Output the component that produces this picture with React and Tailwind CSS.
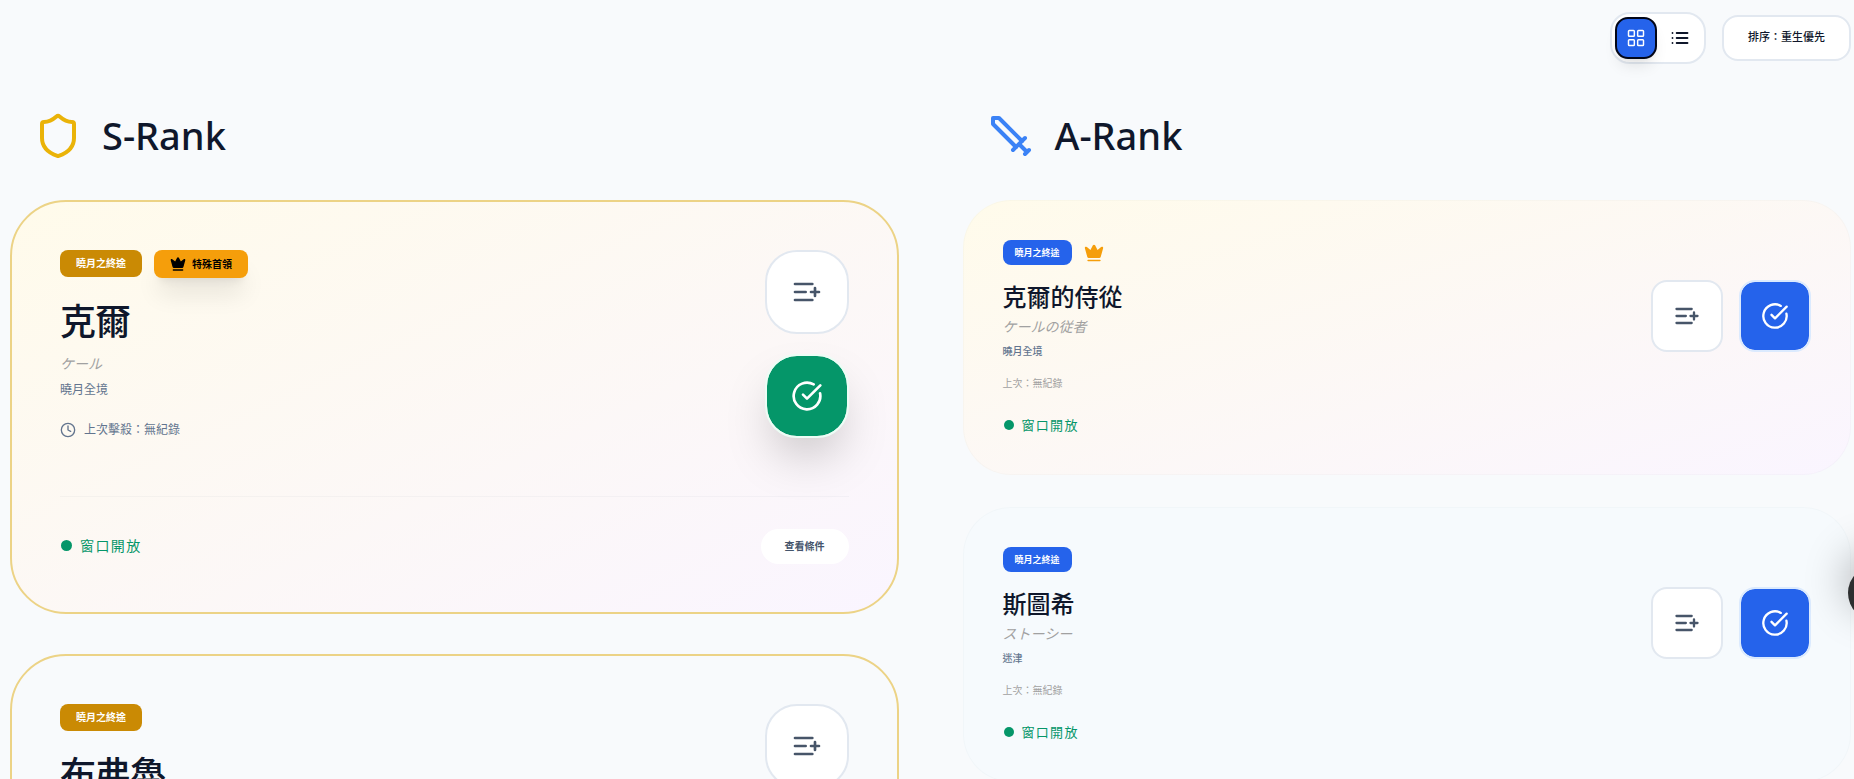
import { CircleCheckBig, Clock, Crown, LayoutGrid } from "lucide-react";

const sRankMobs = [
  { name: "克爾", jp: "ケール", area: "曉月全境", special: true },
  { name: "布弗魯", jp: "ブルブルドゥーム", area: "薩維奈島", special: false },
];

const aRankMobs = [
  { name: "克爾的侍從", jp: "ケールの従者", area: "曉月全境", special: true },
  { name: "斯圖希", jp: "ストーシー", area: "迷津", special: false },
];

const ListPlusIcon = ({ size }) => (
  <svg width={size} height={size} viewBox="0 0 24 24" fill="none" stroke="currentColor" strokeWidth="2" strokeLinecap="round" strokeLinejoin="round" aria-hidden="true">
    <path d="M11 12H3M16 6H3M16 18H3M18 9v6M21 12h-6" />
  </svg>
);

const ListIcon = () => (
  <svg className="size-5" viewBox="0 0 24 24" fill="none" stroke="currentColor" strokeWidth="2.2" strokeLinecap="round" strokeLinejoin="round" aria-hidden="true">
    <path d="M8 6h13M8 12h13M8 18h13M3 6h.01M3 12h.01M3 18h.01" />
  </svg>
);

const ShieldIcon = () => (
  <svg className="size-12 text-[#eab308]" viewBox="0 0 24 24" fill="none" stroke="currentColor" strokeWidth="2" strokeLinecap="round" strokeLinejoin="round" aria-hidden="true">
    <path d="M20 13c0 5-3.5 7.5-7.66 8.95a1 1 0 0 1-.67-.01C7.5 20.5 4 18 4 13V6a1 1 0 0 1 1-1c2 0 4.5-1.2 6.24-2.72a1.17 1.17 0 0 1 1.52 0C14.51 3.81 17 5 19 5a1 1 0 0 1 1 1z" />
  </svg>
);

const SwordIcon = () => (
  <svg className="size-12 text-[#3b82f6]" viewBox="0 0 24 24" fill="none" stroke="currentColor" strokeWidth="2" strokeLinecap="round" strokeLinejoin="round" aria-hidden="true">
    <polyline points="14.5 17.5 3 6 3 3 6 3 17.5 14.5" />
    <path d="M13 19l6-6M16 16l4 4M19 21l2-2" />
  </svg>
);

const Toolbar = () => (
  <div className="flex items-center justify-end gap-4">
    <div className="flex gap-1 rounded-[20px] border-2 border-slate-200 bg-white p-1">
      <button
        type="button"
        aria-label="卡片檢視"
        className="flex size-10 items-center justify-center rounded-xl bg-[#2563eb] text-white shadow-lg outline-2 -outline-offset-1 outline-slate-950"
      >
        <LayoutGrid size={20} strokeWidth={1.75} />
      </button>
      <button
        type="button"
        aria-label="列表檢視"
        className="flex size-10 items-center justify-center rounded-xl text-slate-900"
      >
        <ListIcon />
      </button>
    </div>
    <button
      type="button"
      className="rounded-2xl border-2 border-slate-200 bg-white px-6 pt-3 pb-3.5 text-[11px] leading-4 font-medium text-slate-900"
    >
      排序：重生優先
    </button>
  </div>
);

const RankHeader = ({ icon, title }) => (
  <div className="mb-10 flex h-12 items-center gap-5 px-6">
    {icon}
    <h2 className="pb-0.5 text-[38px] leading-none font-medium text-slate-900">{title}</h2>
  </div>
);

const SRankCard = ({ mob }) => (
  <article
    className={`rounded-[56px] border-2 border-[#ecd386] p-12 ${
      mob.special ? "bg-linear-to-br from-amber-50 to-purple-50" : "bg-slate-50"
    }`}
  >
    <div className="flex items-start justify-between">
      <div>
        <div className="flex items-start gap-3">
          <span className="rounded-lg bg-[#ca8a04] px-4 py-1.5 text-[10px] leading-[15px] font-bold text-white">
            曉月之終途
          </span>
          {mob.special && (
            <span className="flex items-center gap-1.5 rounded-lg bg-[#f59e0b] px-4 py-1.5 text-[10px] leading-4 font-bold text-black shadow-xl">
              <Crown size={16} fill="currentColor" />
              特殊首領
            </span>
          )}
        </div>
        <h3 className="mt-6 text-4xl leading-10 font-medium tracking-tight text-slate-900">{mob.name}</h3>
        <p className="mt-3 text-sm leading-5 text-neutral-400 italic">{mob.jp}</p>
        <p className="mt-2 text-xs leading-4 text-slate-500">{mob.area}</p>
        <p className="mt-6 flex items-center gap-2 text-xs leading-4 text-slate-500">
          <Clock size={16} />
          上次擊殺：無紀錄
        </p>
      </div>
      <div className="flex flex-col gap-5">
        <button
          type="button"
          aria-label="加入清單"
          className="flex size-21 items-center justify-center rounded-[32px] border-2 border-slate-200 bg-white text-[#475569]"
        >
          <ListPlusIcon size={32} />
        </button>
        <button
          type="button"
          aria-label="回報擊殺"
          className="flex size-21 items-center justify-center rounded-[32px] border-2 border-emerald-50 bg-[#059669] bg-clip-padding text-white shadow-2xl"
        >
          <CircleCheckBig size={32} />
        </button>
      </div>
    </div>
    <div className="mt-[58px] flex items-center justify-between border-t border-slate-500/5 pt-8">
      <p className="flex items-center gap-2 pb-0.5 text-sm tracking-widest text-[#059669]">
        <span className="ml-px size-[11px] rounded-full bg-[#059669]" />
        窗口開放
      </p>
      <button
        type="button"
        className="rounded-full bg-white px-6 py-2.5 text-[10px] leading-[15px] font-bold text-slate-600"
      >
        查看條件
      </button>
    </div>
  </article>
);

const ARankCard = ({ mob }) => (
  <article
    className={`rounded-[48px] p-10 inset-ring inset-ring-slate-500/3 ${
      mob.special ? "bg-linear-to-br from-amber-50 to-purple-50" : "bg-[#f6fafd]"
    }`}
  >
    <div className="flex items-center justify-between">
      <div>
        <div className="flex h-[25px] items-center gap-3">
          <span className="rounded-lg bg-[#2563eb] px-3 py-1.5 text-[9px] leading-[13px] font-bold text-white">
            曉月之終途
          </span>
          {mob.special && <Crown size={20} fill="currentColor" className="text-[#f59e0b]" />}
        </div>
        <h3 className="mt-4 text-2xl leading-8 font-medium text-slate-900">{mob.name}</h3>
        <p className="mt-1 text-sm leading-5 text-neutral-400 italic">{mob.jp}</p>
        <p className="mt-1.5 text-[10px] leading-4 font-medium text-slate-500">{mob.area}</p>
        <p className="mt-4 text-[10px] leading-4 text-neutral-400">上次：無紀錄</p>
      </div>
      <div className="flex gap-4">
        <button
          type="button"
          aria-label="加入清單"
          className="flex size-18 items-center justify-center rounded-2xl border-2 border-slate-200 bg-white text-[#475569]"
        >
          <ListPlusIcon size={28} />
        </button>
        <button
          type="button"
          aria-label="回報擊殺"
          className="flex size-18 items-center justify-center rounded-2xl border-2 border-blue-100 bg-[#2563eb] bg-clip-padding text-white"
        >
          <CircleCheckBig size={28} />
        </button>
      </div>
    </div>
    <p className="mt-6 flex items-center gap-2 text-[13px] leading-5 tracking-widest text-[#059669]">
      <span className="ml-px size-2.5 rounded-full bg-[#059669]" />
      窗口開放
    </p>
  </article>
);

const App = () => {
  return (
    <div className="h-screen overflow-hidden bg-slate-50 pt-3 pr-[3px] pl-2.5 font-['Noto_Sans','Noto_Sans_CJK_TC',sans-serif]">
      <Toolbar />
      <main className="mt-12 grid grid-cols-2 gap-16">
        <section>
          <RankHeader icon={<ShieldIcon />} title="S-Rank" />
          <div className="flex flex-col gap-10">
            {sRankMobs.map((mob) => (
              <SRankCard key={mob.name} mob={mob} />
            ))}
          </div>
        </section>
        <section>
          <RankHeader icon={<SwordIcon />} title="A-Rank" />
          <div className="flex flex-col gap-8">
            {aRankMobs.map((mob) => (
              <ARankCard key={mob.name} mob={mob} />
            ))}
          </div>
        </section>
      </main>

      {/* side menu handle, tucked behind the right edge */}
      <button
        type="button"
        aria-label="開啟選單"
        className="fixed top-[565px] -right-[50px] size-14 rounded-full bg-[#2d2f30] shadow-[0_-12px_40px_4px_rgba(0,0,0,0.25)]"
      />
    </div>
  );
};

export default App;
